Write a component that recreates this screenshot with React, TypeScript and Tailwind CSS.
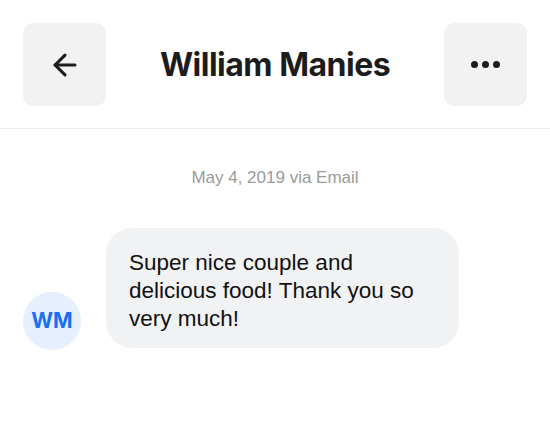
import { ArrowLeft } from "lucide-react";

const App = () => {
	return (
		<div className="h-[425px] w-[550px] bg-white font-['Liberation_Sans',Arial,sans-serif]">
			<div className="flex h-[129px] items-start justify-between border-b border-[#ececec] px-[23px] pt-[23px]">
				<button className="flex h-[83px] w-[83px] items-center justify-center rounded-[10px] bg-[#f2f2f2]">
					<ArrowLeft className="h-[34px] w-[34px] text-[#1c1c1c]" strokeWidth={2.2} />
				</button>
				<h1 className="mt-[18px] font-['Inter',sans-serif] text-[32px] font-bold tracking-[-0.5px] text-[#1c1c1c]">
					William Manies
				</h1>
				<button className="flex h-[83px] w-[83px] items-center justify-center gap-[4px] rounded-[10px] bg-[#f2f2f2]">
					<span className="h-[7px] w-[7px] rounded-full bg-[#1c1c1c]" />
					<span className="h-[7px] w-[7px] rounded-full bg-[#1c1c1c]" />
					<span className="h-[7px] w-[7px] rounded-full bg-[#1c1c1c]" />
				</button>
			</div>

			<p className="mt-[36px] text-center text-[17px] text-[#9a9a9a]">May 4, 2019 via Email</p>

			<div className="mt-[37px] flex items-end gap-[25px] px-[23px]">
				<div className="mb-[-2px] flex h-[58px] w-[58px] shrink-0 items-center justify-center rounded-full bg-[#e6effd] font-['Inter',sans-serif] text-[21px] font-bold text-[#1a6ff0]">
					WM
				</div>
				<div className="w-[353px] rounded-[26px] bg-[#f1f2f4] px-[23px] pt-[21px] pb-[15px] text-[22.5px] leading-[28px] text-[#111]">
					Super nice couple and delicious food! Thank you so very much!
				</div>
			</div>
		</div>
	);
};

export default App;
